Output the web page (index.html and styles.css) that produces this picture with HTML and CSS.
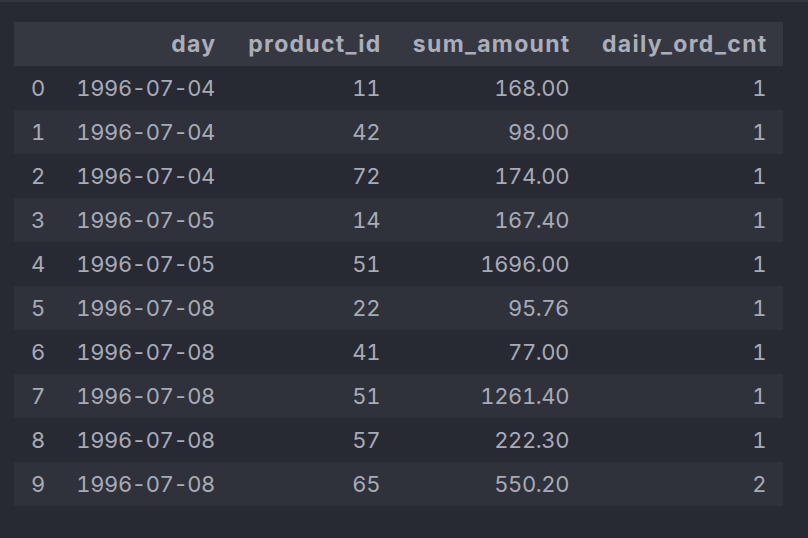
FILE: index.html
```html
<!DOCTYPE html>
<html>
<head>
<meta charset="utf-8">
<link rel="stylesheet" href="styles.css">
</head>
<body>
<div class="topline"></div>
<div class="wrap">
<table class="df">
<colgroup>
<col class="c-idx"><col class="c-day"><col class="c-pid"><col class="c-sum"><col class="c-cnt">
</colgroup>
<thead>
<tr><th></th><th>day</th><th>product_id</th><th>sum_amount</th><th>daily_ord_cnt</th></tr>
</thead>
<tbody>
<tr><td class="idx">0</td><td>1996-07-04</td><td>11</td><td>168.00</td><td>1</td></tr>
<tr><td class="idx">1</td><td>1996-07-04</td><td>42</td><td>98.00</td><td>1</td></tr>
<tr><td class="idx">2</td><td>1996-07-04</td><td>72</td><td>174.00</td><td>1</td></tr>
<tr><td class="idx">3</td><td>1996-07-05</td><td>14</td><td>167.40</td><td>1</td></tr>
<tr><td class="idx">4</td><td>1996-07-05</td><td>51</td><td>1696.00</td><td>1</td></tr>
<tr><td class="idx">5</td><td>1996-07-08</td><td>22</td><td>95.76</td><td>1</td></tr>
<tr><td class="idx">6</td><td>1996-07-08</td><td>41</td><td>77.00</td><td>1</td></tr>
<tr><td class="idx">7</td><td>1996-07-08</td><td>51</td><td>1261.40</td><td>1</td></tr>
<tr><td class="idx">8</td><td>1996-07-08</td><td>57</td><td>222.30</td><td>1</td></tr>
<tr><td class="idx">9</td><td>1996-07-08</td><td>65</td><td>550.20</td><td>2</td></tr>
</tbody>
</table>
</div>
</body>
</html>
```
FILE: styles.css
```css
html, body {
  margin: 0;
  padding: 0;
  background: #282a33;
  width: 808px;
  height: 538px;
  overflow: hidden;
}
.topline {
  height: 2px;
  background: #33363e;
}
.wrap {
  padding: 20px 0 0 14px;
}
.df {
  border-collapse: collapse;
  table-layout: fixed;
  width: 769px;
  font-family: Inter, "Noto Sans", sans-serif;
  font-size: 22px;
  color: #a7abb6;
  font-variant-numeric: tabular-nums;
}
.c-idx { width: 47px; }
.c-day { width: 171px; }
.c-pid { width: 165px; }
.c-sum { width: 189px; }
.c-cnt { width: 197px; }
.df th, .df td {
  height: 44px;
  padding: 0 16px 0 0;
  text-align: right;
  white-space: nowrap;
  box-sizing: border-box;
}
.df td {
  letter-spacing: -0.4px;
  padding-right: 17px;
}
.df th {
  font-size: 23px;
  font-weight: 700;
  background: #363841;
  color: #aaaeb9;
  letter-spacing: 1.3px;
  padding-right: 15.5px;
}
.df td.idx {
  text-align: left;
  padding: 0 0 0 17px;
}
.df tbody tr:nth-child(even) td {
  background: #30323b;
}
```
